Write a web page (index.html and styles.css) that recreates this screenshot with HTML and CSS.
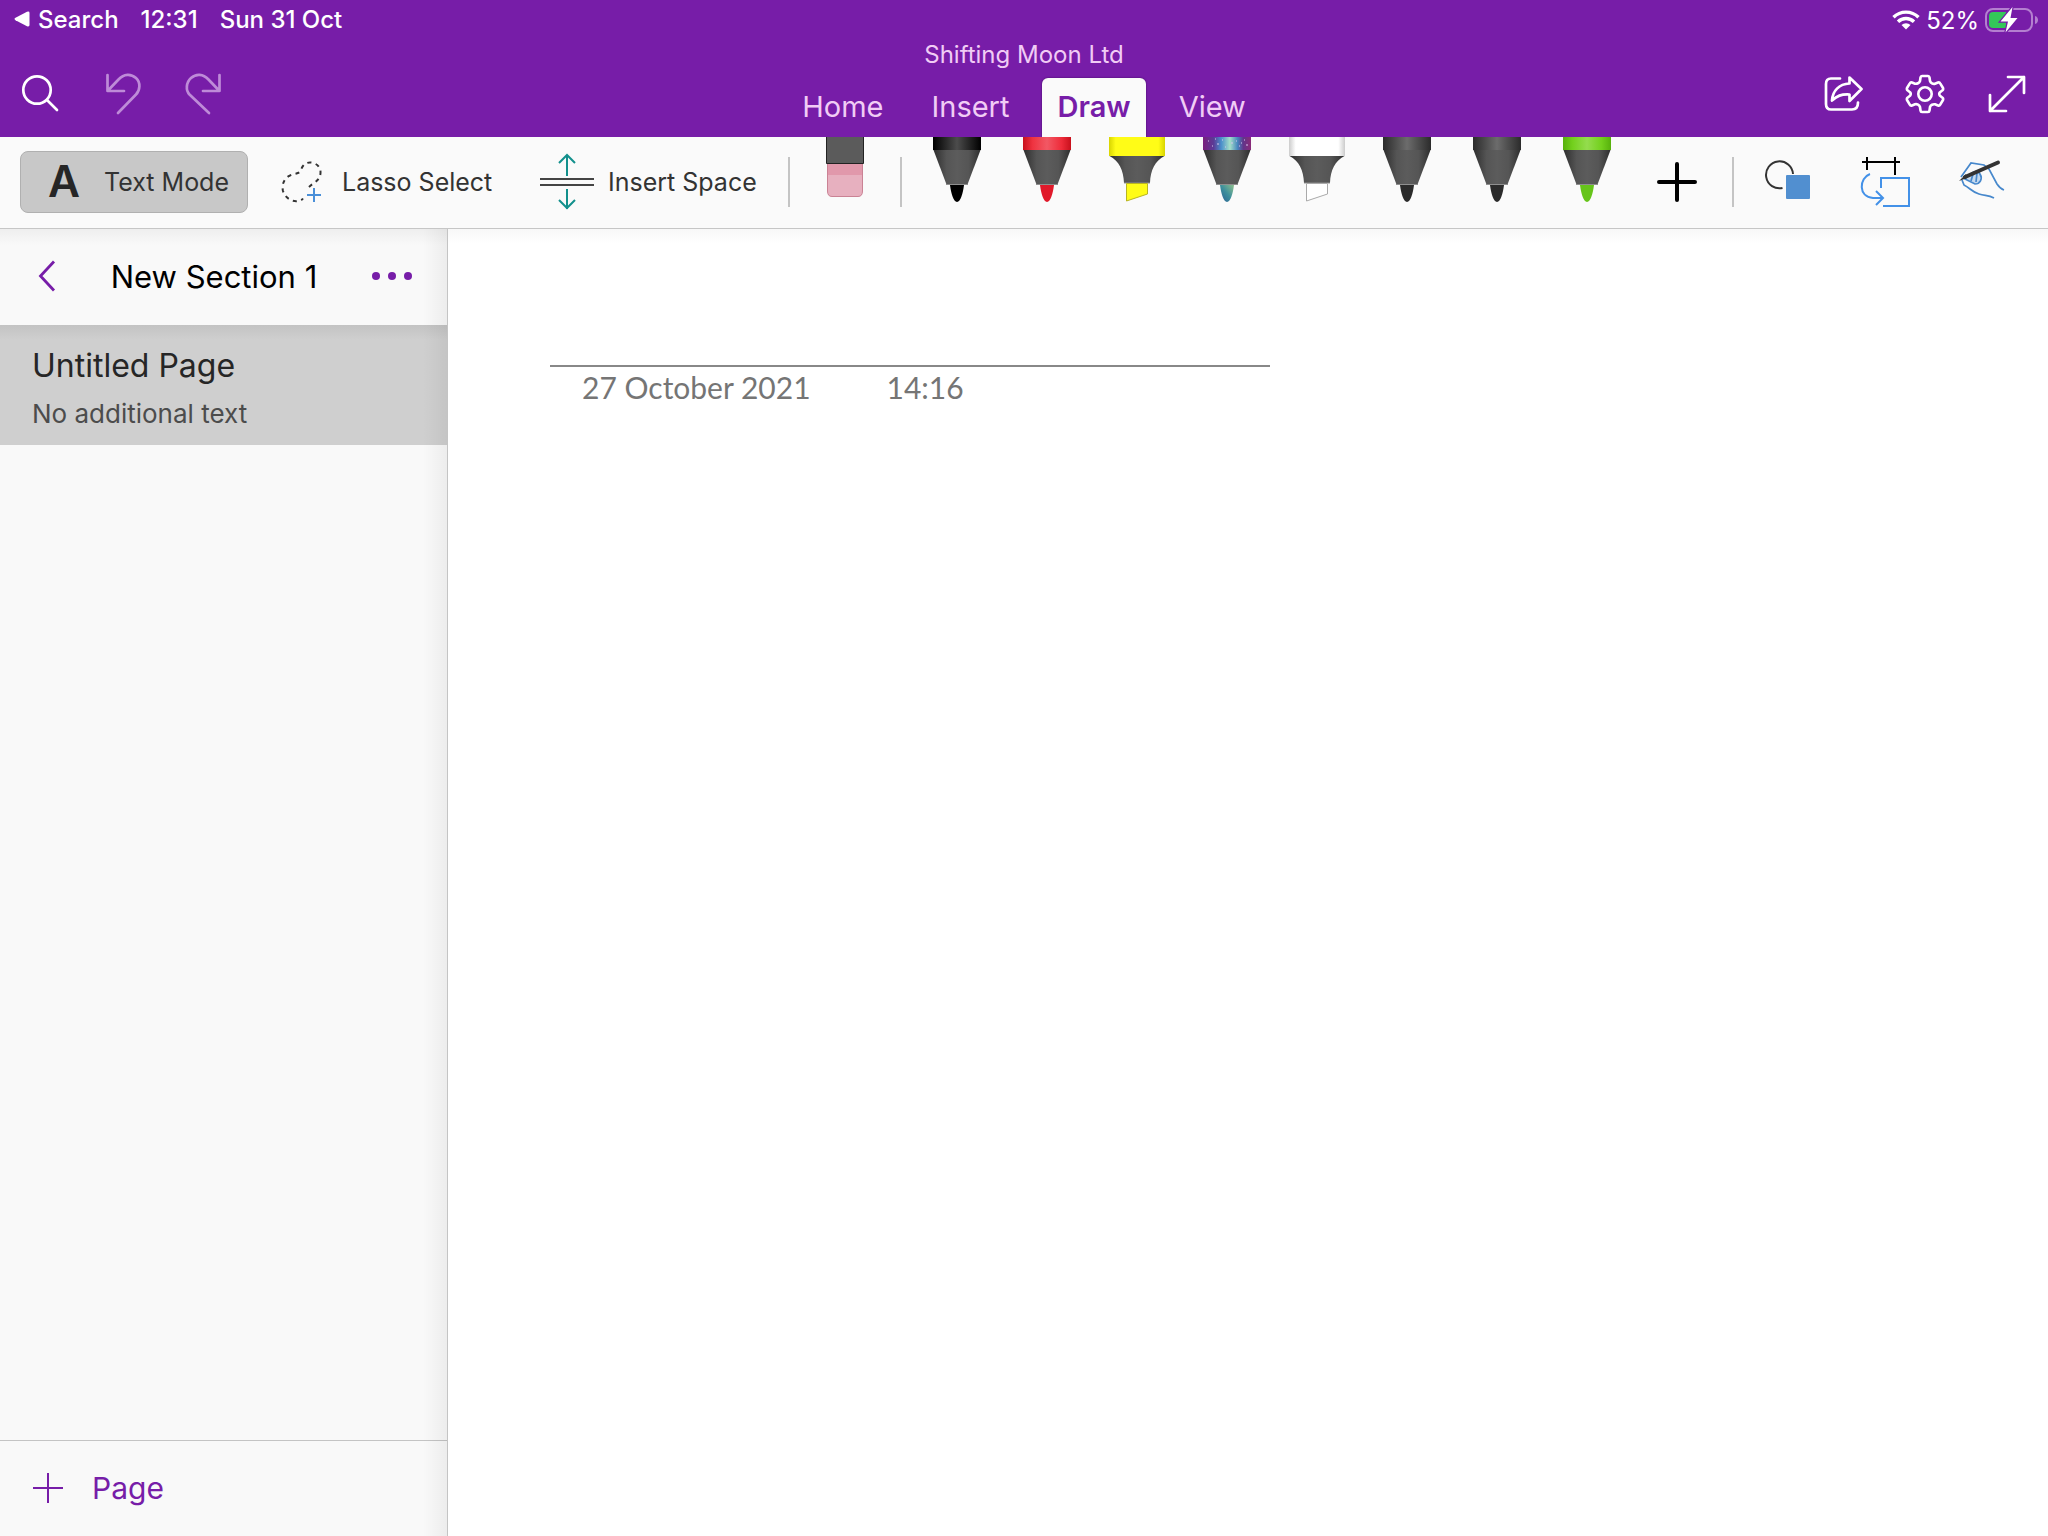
FILE: index.html
```html
<!DOCTYPE html>
<html lang="en">
<head>
<meta charset="utf-8">
<title>New Section 1</title>
<meta name="viewport" content="width=device-width, initial-scale=1">
<link rel="stylesheet" href="styles.css">
</head>
<body>
<svg class="defs" width="0" height="0" aria-hidden="true">
  <defs>
    <linearGradient id="cone"><stop offset="0" stop-color="#2e2e2e"/><stop offset=".28" stop-color="#555"/><stop offset=".5" stop-color="#5c5c5c"/><stop offset=".75" stop-color="#555"/><stop offset="1" stop-color="#2e2e2e"/></linearGradient>
    <linearGradient id="black"><stop offset="0" stop-color="#000"/><stop offset=".5" stop-color="#4c4c4c"/><stop offset="1" stop-color="#000"/></linearGradient>
    <linearGradient id="red"><stop offset="0" stop-color="#c8101c"/><stop offset=".2" stop-color="#ef3340"/><stop offset=".5" stop-color="#f25864"/><stop offset=".8" stop-color="#ee2c3a"/><stop offset="1" stop-color="#c8101c"/></linearGradient>
    <linearGradient id="yellow"><stop offset="0" stop-color="#d8d400"/><stop offset=".12" stop-color="#fffc17"/><stop offset=".88" stop-color="#fffc17"/><stop offset="1" stop-color="#d8d400"/></linearGradient>
    <linearGradient id="white"><stop offset="0" stop-color="#ccc"/><stop offset=".12" stop-color="#fff"/><stop offset=".88" stop-color="#fff"/><stop offset="1" stop-color="#ccc"/></linearGradient>
    <linearGradient id="grey"><stop offset="0" stop-color="#2b2b2b"/><stop offset=".5" stop-color="#6c6c6c"/><stop offset="1" stop-color="#2b2b2b"/></linearGradient>
    <linearGradient id="green"><stop offset="0" stop-color="#57b00c"/><stop offset=".2" stop-color="#73d01d"/><stop offset=".5" stop-color="#94dc4e"/><stop offset=".8" stop-color="#73d01d"/><stop offset="1" stop-color="#57b00c"/></linearGradient>
    <linearGradient id="galaxy"><stop offset="0" stop-color="#7a1f7c"/><stop offset=".22" stop-color="#5b3a96"/><stop offset=".38" stop-color="#4a8fcb"/><stop offset=".56" stop-color="#a5dfc9"/><stop offset=".72" stop-color="#4686bd"/><stop offset=".84" stop-color="#62348a"/><stop offset="1" stop-color="#8a2a78"/></linearGradient>
    <linearGradient id="galaxy-tip" x1="0" y1="1" x2="1" y2="0"><stop offset="0" stop-color="#2d5f93"/><stop offset=".5" stop-color="#3d8f9c"/><stop offset="1" stop-color="#8fc08c"/></linearGradient>
    <symbol id="pen" viewBox="0 0 48 66">
      <path d="M0 0H48V13H0Z"/>
      <path d="M.5 13H47.500L34.500 47.500H13.500Z" style="fill:url(#cone)"/>
      <path d="M13 47.500H35" stroke="#8f8f8f"/>
    </symbol>
    <symbol id="nib" viewBox="0 0 48 66"><path d="M17 48H31C30 56 27.500 65 24 65S18 56 17 48Z"/></symbol>
    <symbol id="neck" viewBox="0 0 56 66">
      <path d="M0 0H56V19H0Z"/>
      <path d="M.5 19H55.500C46 24 41.500 33 41 46H15C14.500 33 10 24 .5 19Z" style="fill:url(#cone)"/>
      <path d="M15 46H41" stroke="#8f8f8f"/>
    </symbol>
  </defs>
</svg>

<header class="app-header">
  <div class="status">
    <div class="status-side">
      <a class="status-back" href="#search"><svg width="16" height="16" viewBox="0 0 16 16"><path d="M1.500 6.800 13 .8Q15.500 0 15.500 2V14Q15.500 16 13 15.200L1.500 9.200Q-.5 8 1.500 6.800Z" fill="#fff"/></svg>Search</a>
      <span>12:31</span>
      <span>Sun 31 Oct</span>
    </div>
    <div class="status-power">
      <svg width="28" height="20" viewBox="0 0 28 20" fill="none" stroke="#fff" stroke-width="3.400"><path d="M1.500 7.300a17.800 17.800 0 0 1 25 0M6 11.800a11.500 11.500 0 0 1 16 0"/><path d="M14 19.500 9.500 15a6.600 6.600 0 0 1 9 0Z" fill="#fff" stroke="none"/></svg>
      <span>52%</span>
      <svg width="54" height="26" viewBox="0 0 54 26"><rect x="1" y="2" width="46" height="22" rx="7" fill="none" stroke="#b47fd0" stroke-width="2"/><path d="M50 9c4 1 4 7 0 8Z" fill="#b47fd0"/><path d="M8 5H21V21H8Q4 21 4 17V9Q4 5 8 5Z" fill="#34c759"/><path d="M27.500 0 15.500 14.500H23L20.500 25.500 32.500 11H25.500Z" fill="#fff" stroke="#771da8" stroke-width="2.500" paint-order="stroke"/></svg>
    </div>
  </div>
  <div class="nav">
    <div class="actions">
      <button aria-label="Search notes"><svg width="40" height="40" viewBox="0 0 40 40" stroke="#fff" stroke-width="2.700"><circle cx="17" cy="16" r="13.700"/><path d="M27 26 37 36"/></svg></button>
      <button aria-label="Undo"><svg width="40" height="44" viewBox="0 0 40 44" stroke="#be8bd8" stroke-width="2.700"><path d="M5.500 3V19H22M6 18.500 16.500 7.500C22 1.500 29 1.500 34 6S38 18.500 34 22.500L16 41"/></svg></button>
      <button aria-label="Redo"><svg width="40" height="44" viewBox="0 0 40 44" stroke="#be8bd8" stroke-width="2.700"><path d="M35.500 3V19H19M35 18.500 24.500 7.500C19 1.500 12 1.500 7 6S1.500 18.500 5.500 22.500L25 41"/></svg></button>
    </div>
    <div class="notebook">
      <div class="notebook-name">Shifting Moon Ltd</div>
      <nav class="tabs">
        <button>Home</button>
        <button>Insert</button>
        <button class="active">Draw</button>
        <button>View</button>
      </nav>
    </div>
    <div class="actions actions-end">
      <button aria-label="Share"><svg width="40" height="40" viewBox="0 0 40 40" stroke="#fff" stroke-width="2.700"><path d="M17 4.500H8Q3 4.500 3 10V30Q3 35.500 8 35.500H29Q35 35.500 35 28.500"/><path d="M26.500 3.500 38.500 15 26.500 27V20.500C18 20 14 22 9 26.500C9.500 17 16 10 26.500 9.500Z"/></svg></button>
      <button aria-label="Settings"><svg width="40" height="40" viewBox="0 0 40 40" stroke="#fff" stroke-width="2.600"><circle cx="20" cy="20" r="6.700"/><path d="M17 2H23Q24.300 2 24.500 3.500L25 7Q25.500 8.500 27 9.300T30 9.700L33 8.500Q34.500 8 35.200 9.300L38 14Q38.500 15.300 37.500 16.300L35 18.200Q33.500 20 35 21.800L37.500 23.700Q38.500 24.700 38 26L35.200 30.700Q34.500 32 33 31.500L30 30.300Q28.500 30 27 30.700T25 33L24.500 36.500Q24.300 38 23 38H17Q15.700 38 15.500 36.500L15 33Q14.500 31.500 13 30.700T10 30.300L7 31.500Q5.500 32 4.800 30.700L2 26Q1.500 24.700 2.500 23.700L5 21.800Q6.500 20 5 18.200L2.500 16.300Q1.500 15.300 2 14L4.800 9.300Q5.500 8 7 8.500L10 9.700Q11.500 10 13 9.300T15 7L15.500 3.500Q15.700 2 17 2Z"/></svg></button>
      <button aria-label="Full screen"><svg width="40" height="40" viewBox="0 0 40 40" stroke="#fff" stroke-width="2.700"><path d="M3 37 37 3M21 3H37V19M3 21V37H19"/></svg></button>
    </div>
  </div>
</header>

<div class="toolbar" role="toolbar" aria-label="Draw">
  <div class="modes">
    <button class="mode active"><span class="letter" aria-hidden="true">A</span>Text Mode</button>
    <button class="mode lasso"><svg width="42" height="42" viewBox="0 0 42 42" fill="none" stroke-width="2"><path d="M28 26C33 21 39 20 39.500 12C40 5 34 1.500 29 1.500C23 1.500 21 6 19.500 10C18 13 14 12 9 14.500C3 17 .5 24 2 30C4 37 11 41 17 40C19 40 21 39 22 37.500" stroke="#333" stroke-dasharray="4 4.500"/><path d="M33 27V41M26 34H40" stroke="#4a8fd8"/></svg>Lasso Select</button>
    <button class="mode space"><svg width="54" height="58" viewBox="0 0 54 58" fill="none" stroke-width="2"><path d="M0 26H54M0 32H54" stroke="#444"/><path d="M27 23V2M19 10 27 2 35 10M27 36V56M19 47 27 55 35 47" stroke="#12908c"/></svg>Insert Space</button>
  </div>
  <span class="divider"></span>
  <button class="eraser" aria-label="Eraser"><svg width="38" height="66" viewBox="0 0 38 66"><path d="M1.500 26H36.500V54Q36.500 59.500 32 59.500H6Q1.500 59.500 1.500 54Z" fill="#e7b0bf" stroke="#ca8294"/><path d="M2 26H36V38H2Z" fill="#e198ab"/><path d="M.5 0V26.500H37.500V0" fill="#5b5b5b" stroke="#222"/></svg></button>
  <span class="divider"></span>
  <div class="pens">
    <button aria-label="Black pen"><svg width="48" height="66"><use href="#pen" fill="url(#black)"/><use href="#nib" fill="#000"/></svg></button>
    <button aria-label="Red pen"><svg width="48" height="66"><use href="#pen" fill="url(#red)"/><use href="#nib" fill="#e0192a"/></svg></button>
    <button aria-label="Yellow highlighter"><svg width="56" height="66"><use href="#neck" fill="url(#yellow)"/><path d="M17.500 46.500H38.500V57L17.500 64Z" fill="#fffc17" stroke="#b9b520"/></svg></button>
    <button aria-label="Galaxy pen"><svg width="48" height="66"><use href="#pen" fill="url(#galaxy)"/><path d="M5 4h1M9 9h1M14 7h2M19 3h1M22 10h1M28 6h2M33 4h1M36 9h1M41 3h1M43 8h2M12 2h1M38 6h1" stroke="#d5c5ec" stroke-width="1"/><use href="#nib" fill="url(#galaxy-tip)"/></svg></button>
    <button aria-label="White highlighter"><svg width="56" height="66"><use href="#neck" fill="url(#white)"/><path d="M17.500 46.500H38.500V57L17.500 64Z" fill="#fff" stroke="#aaa"/></svg></button>
    <button aria-label="Grey pen"><svg width="48" height="66"><use href="#pen" fill="url(#grey)"/><use href="#nib" fill="#2b2b2b"/></svg></button>
    <button aria-label="Grey pen, second"><svg width="48" height="66"><use href="#pen" fill="url(#grey)"/><use href="#nib" fill="#2b2b2b"/></svg></button>
    <button aria-label="Green pen"><svg width="48" height="66"><use href="#pen" fill="url(#green)"/><use href="#nib" fill="#66c41a"/></svg></button>
    <button class="add-pen" aria-label="Add pen"><svg width="40" height="40" viewBox="0 0 40 40"><path d="M20 2V38M2 20H38" stroke="#000" stroke-width="4" stroke-linecap="round"/></svg></button>
  </div>
  <span class="divider"></span>
  <div class="ink-tools">
    <button aria-label="Shapes"><svg width="46" height="50" viewBox="0 0 46 50"><path d="M28 17A13.500 13.500 0 1 0 17.500 31" fill="none" stroke="#333" stroke-width="2"/><rect x="21" y="18" width="24" height="24" rx="1" fill="#518fd0"/></svg></button>
    <button aria-label="Ink to shape"><svg width="50" height="50" viewBox="0 0 50 50" fill="none" stroke-width="2"><path d="M2 5H40M7 0V13M35 0V18" stroke="#000"/><path d="M21 31V21H49V49H23M10 17C-1 21-2 40 13 41H23M16 34 23 41 16 48" stroke="#4391e8"/></svg></button>
    <button aria-label="Draw with touch"><svg width="48" height="50" viewBox="0 0 48 50" fill="none" stroke="#4788cc" stroke-width="1.700"><path d="M11 18C15 14 20 13 22 17C25 22 22 27 17 27L7 22Z" fill="#c4d9ef"/><path d="M3 20 13 6 26 8 31 12 39 27C41 30 43 32 46 33"/><path d="M4 23 6 28C12 31 14 35 21 37C27 39 30 38 36 41"/><path d="M15 17 13 24M19 16 18 25"/><path d="M7 20 40 5.500" stroke="#333" stroke-width="4" stroke-linecap="round"/><path d="M1 24 8 17 9 21Z" fill="#333" stroke="none"/></svg></button>
  </div>
</div>

<div class="workspace">
  <aside class="sidebar">
    <div class="section-head">
      <button aria-label="Back"><svg width="18" height="32" viewBox="0 0 18 32" fill="none" stroke="#771da8" stroke-width="2.800"><path d="M16 1.500 2.500 16 16 30.500"/></svg></button>
      <h1>New Section 1</h1>
      <button aria-label="More options"><svg width="40" height="8" viewBox="0 0 40 8" fill="#771da8"><circle cx="4" cy="4" r="4"/><circle cx="20" cy="4" r="4"/><circle cx="36" cy="4" r="4"/></svg></button>
    </div>
    <a class="page-item" href="#page">
      <span class="page-title">Untitled Page</span>
      <span class="page-preview">No additional text</span>
    </a>
    <button class="add-page"><svg width="30" height="30" viewBox="0 0 30 30" stroke="#771da8" stroke-width="2"><path d="M15 0V30M0 15H30"/></svg>Page</button>
  </aside>
  <main class="canvas" id="page">
    <input class="title-input" type="text" aria-label="Page title">
    <div class="stamp"><span>27 October 2021</span><span>14:16</span></div>
  </main>
</div>
</body>
</html>
```

FILE: styles.css
```css
* {
  box-sizing: border-box;
}

body {
  margin: 0;
  min-height: 100vh;
  display: flex;
  flex-direction: column;
  font-family: Inter, "Liberation Sans", sans-serif;
  background: #fff;
}

button {
  margin: 0;
  padding: 0;
  border: 0;
  background: none;
  color: inherit;
  font: inherit;
}

svg {
  display: block;
  flex: none;
}

.defs {
  position: absolute;
}

/* Header */
.app-header {
  background: #771da8;
  color: #fff;
}

.status {
  height: 40px;
  padding: 0 9px 0 14px;
  display: flex;
  justify-content: space-between;
  align-items: center;
  font-size: 24px;
  font-weight: 500;
}

.status-side {
  display: flex;
  gap: 22px;
  padding-bottom: 2px;
}

.status-back {
  display: flex;
  align-items: center;
  gap: 8px;
  color: inherit;
  text-decoration: none;
}

.status-power {
  display: flex;
  align-items: center;
  gap: 6px;
  font-weight: 400;
}

.nav {
  display: grid;
  grid-template-columns: 1fr auto 1fr;
  grid-template-rows: 97px;
}

.actions {
  display: flex;
  gap: 2px;
  padding: 11px 1px 0 0;
}

.actions-end {
  justify-content: flex-end;
}

.actions button {
  width: 80px;
  display: grid;
  place-items: center;
}

.actions svg {
  fill: none;
  stroke-linecap: round;
  stroke-linejoin: round;
}

.notebook {
  display: flex;
  flex-direction: column;
  justify-content: space-between;
  color: #f1ccf5;
}

.notebook-name {
  text-align: center;
  font-size: 24px;
  line-height: 30px;
}

.tabs {
  display: flex;
  gap: 18px;
}

.tabs button {
  height: 59px;
  padding: 0 15px 2px;
  font-size: 29px;
}

.tabs .active {
  background: #fafafa;
  color: #771da8;
  font-weight: 600;
  border-radius: 6px 6px 0 0;
  box-shadow: 0 0 2px #3d0a5a;
  clip-path: inset(-2px -2px 0 -2px);
}

/* Ribbon */
.toolbar {
  height: 92px;
  padding: 0 18px 1px 20px;
  display: flex;
  align-items: center;
  background: #fafafa;
  border-bottom: 1px solid #c6c6c6;
  color: #333;
  font-size: 25px;
}

.modes {
  flex: none;
  width: 768px;
  display: flex;
}

.mode {
  height: 62px;
  display: flex;
  align-items: center;
  white-space: nowrap;
}

.mode.active {
  width: 228px;
  padding-left: 27px;
  gap: 24px;
  background: #c8c8c8;
  border: 1px solid #b0b0b0;
  border-radius: 8px;
}

.letter {
  width: 32px;
  font-size: 44px;
  line-height: 58px;
  padding-bottom: 2px;
  font-weight: 600;
  color: #262626;
}

.lasso {
  width: 259px;
  margin-left: 33px;
  gap: 19px;
}

.space {
  gap: 14px;
}

.divider {
  flex: none;
  width: 2px;
  height: 50px;
  background: #c4c4c4;
}

.eraser,
.pens,
.ink-tools {
  align-self: stretch;
  display: flex;
}

.eraser {
  width: 110px;
  justify-content: center;
}

.pens {
  flex: none;
  padding: 0 10px;
}

.pens button {
  width: 90px;
  display: flex;
  justify-content: center;
}

.pens .add-pen {
  align-items: center;
}

.ink-tools {
  flex: 1;
  padding-left: 6px;
}

.ink-tools button {
  flex: 1;
  display: grid;
  place-items: center;
}

/* Workspace */
.workspace {
  flex: 1;
  display: flex;
}

.sidebar {
  position: relative;
  flex: none;
  width: 448px;
  display: flex;
  flex-direction: column;
  background: #f9f9f9;
  border-right: 1px solid #c4c4c4;
}

.sidebar::after {
  content: "";
  position: absolute;
  inset: 0 0 0 auto;
  width: 24px;
  background: linear-gradient(to right, transparent, rgba(0, 0, 0, 0.05));
  pointer-events: none;
}

.section-head {
  height: 96px;
  padding: 0 35px 2px 38px;
  display: flex;
  align-items: center;
  justify-content: space-between;
  background: linear-gradient(#eee, #f9f9f9 16px);
}

.section-head h1 {
  margin: 0;
  font-size: 31px;
  font-weight: 400;
}

.page-item {
  height: 120px;
  padding: 21px 32px;
  display: flex;
  flex-direction: column;
  gap: 13px;
  background: linear-gradient(#c3c3c3, #cfcfcf 15px);
  color: #262626;
  text-decoration: none;
}

.page-title {
  font-size: 32px;
  line-height: 40px;
}

.page-preview {
  font-size: 26px;
  line-height: 30px;
  color: #4c4c4c;
}

.add-page {
  height: 96px;
  margin-top: auto;
  padding: 0 33px 1px;
  display: flex;
  align-items: center;
  gap: 29px;
  border-top: 1px solid #c4c4c4;
  color: #771da8;
  font-size: 30px;
}

.canvas {
  flex: 1;
  padding: 76px 102px;
  background: linear-gradient(#f8f8f8, #fff 14px);
}

.title-input {
  display: block;
  width: 720px;
  max-width: 100%;
  height: 62px;
  padding: 0 32px;
  border: 0;
  border-bottom: 2px solid #888;
  background: none;
  font: 40px/1 Lato, sans-serif;
  outline: 0;
}

.stamp {
  display: flex;
  gap: 76px;
  padding: 2px 32px;
  font: 30px/36px Lato, "Open Sans", sans-serif;
  color: #757575;
}
```
